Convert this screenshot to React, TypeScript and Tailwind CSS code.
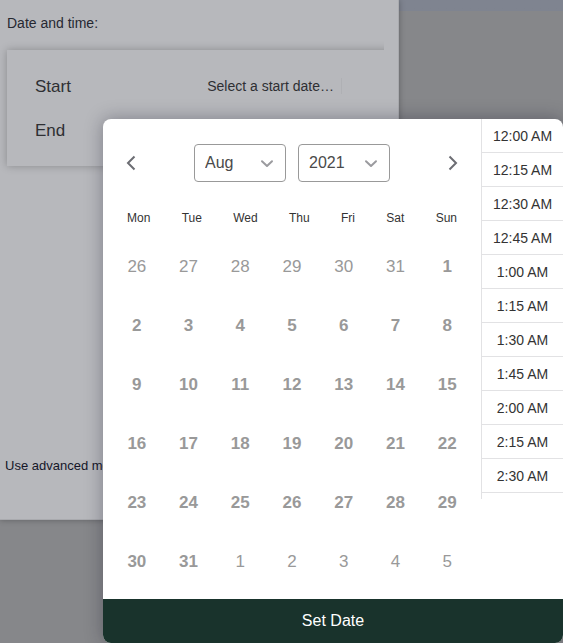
import { useState } from "react";

const months = ["Jan", "Feb", "Mar", "Apr", "May", "Jun", "Jul", "Aug", "Sep", "Oct", "Nov", "Dec"];
const years = ["2020", "2021", "2022"];
const weekdays = ["Mon", "Tue", "Wed", "Thu", "Fri", "Sat", "Sun"];
const times = [
  "12:00 AM",
  "12:15 AM",
  "12:30 AM",
  "12:45 AM",
  "1:00 AM",
  "1:15 AM",
  "1:30 AM",
  "1:45 AM",
  "2:00 AM",
  "2:15 AM",
  "2:30 AM",
];

type Day = { key: string; label: number; current: boolean };

// six weeks starting on a Monday, padded with the neighbouring months
const getDays = (year: number, month: number): Day[] => {
  const offset = (new Date(year, month, 1).getDay() + 6) % 7;
  return Array.from({ length: 42 }, (_, i) => {
    const date = new Date(year, month, 1 - offset + i);
    return {
      key: date.toDateString(),
      label: date.getDate(),
      current: date.getMonth() === month,
    };
  });
};

type DropdownProps = {
  label: string;
  value: string;
  options: string[];
  onChange: (value: string) => void;
};

const Dropdown = ({ label, value, options, onChange }: DropdownProps) => (
  <div className="relative h-[38px] w-[92px]">
    <select
      aria-label={label}
      value={value}
      onChange={(e) => onChange(e.target.value)}
      className="h-full w-full appearance-none rounded border border-[#999999] bg-white pl-[10px] text-base text-[#4a4a4a]"
    >
      {options.map((option) => (
        <option key={option}>{option}</option>
      ))}
    </select>
    <svg
      viewBox="0 0 20 20"
      className="pointer-events-none absolute top-[9px] right-2 h-5 w-5 fill-none stroke-[#9b9b9f] stroke-2"
    >
      <path d="M4 8.2 L9 13 L14 8.2" strokeLinecap="round" strokeLinejoin="round" />
    </svg>
  </div>
);

const App = () => {
  const [month, setMonth] = useState("Aug");
  const [year, setYear] = useState("2021");
  const days = getDays(Number(year), months.indexOf(month));

  const move = (step: number) => {
    const date = new Date(Number(year), months.indexOf(month) + step, 1);
    if (!years.includes(String(date.getFullYear()))) return;
    setMonth(months[date.getMonth()]);
    setYear(String(date.getFullYear()));
  };

  return (
    <div className="relative min-h-screen overflow-hidden bg-[#86878a] font-['Liberation_Sans',Arial,sans-serif]">
      <div className="bg-linear-to-b from-[#7f8490] from-[11px] to-transparent to-[11px]">
        <main className="flex h-[520px] w-full max-w-[399px] flex-col border-r border-b border-[#a9aaae] bg-[#b7b8bc] shadow-[0_0_6px_rgba(0,0,0,0.3)]">
          <h1 className="px-[7px] pt-[13px] text-sm leading-5 text-[#262832]">Date and time:</h1>
          <div className="mr-[14px] overflow-hidden pt-[17px] pb-4 pl-[7px]">
            <div className="-mr-4 flex h-[116px] flex-col gap-5 bg-[#b7b8bc] pt-[25px] pr-[58px] pl-7 text-[17px] leading-6 text-[#2e2f33] shadow-[0_0_8px_rgba(0,0,0,0.25)]">
              <div className="flex items-start justify-between">
                <span>Start</span>
                <button className="mt-[3px] h-4 border-r border-[#afb0b4] pr-[7px] text-sm leading-4">
                  Select a start date…
                </button>
              </div>
              <span>End</span>
            </div>
          </div>
          <a href="#advanced" className="mt-auto mb-[43px] pl-[5px] text-[13px] leading-5 text-[#151629]">
            Use advanced mode
          </a>
        </main>
      </div>

      <div
        role="dialog"
        aria-label="Choose a date"
        className="absolute top-[119px] right-0 left-[103px] overflow-hidden rounded-lg bg-white shadow-[0_0_18px_rgba(20,20,40,0.35)]"
      >
        <div className="flex h-[480px]">
          <div className="flex-1">
            <div className="flex items-center justify-between px-4 pt-[25px]">
              <button aria-label="Previous month" onClick={() => move(-1)}>
                <svg viewBox="0 0 24 24" className="h-6 w-6 fill-none stroke-[#6c6d73] stroke-2">
                  <path d="M15.5 5.5 L9 12 L15.5 18.5" />
                </svg>
              </button>
              <div className="flex gap-3">
                <Dropdown label="Month" value={month} options={months} onChange={setMonth} />
                <Dropdown label="Year" value={year} options={years} onChange={setYear} />
              </div>
              <button aria-label="Next month" onClick={() => move(1)}>
                <svg viewBox="0 0 24 24" className="h-6 w-6 fill-none stroke-[#6c6d73] stroke-2">
                  <path d="M8.5 5.5 L15 12 L8.5 18.5" />
                </svg>
              </button>
            </div>

            <div className="mt-7 flex justify-between px-6 text-xs leading-4 text-[#333333]">
              {weekdays.map((weekday) => (
                <span key={weekday}>{weekday}</span>
              ))}
            </div>

            <div className="mt-[11px] grid grid-cols-7 px-2">
              {days.map((day) => (
                <button
                  key={day.key}
                  className={
                    day.current
                      ? "h-[59px] text-[17px] font-bold text-[#999999]"
                      : "h-[59px] text-[17px] text-[#999999]"
                  }
                >
                  {day.label}
                </button>
              ))}
            </div>
          </div>

          <ul className="h-[380px] w-[82px] overflow-y-auto border-l border-[#e2e2e4]">
            {times.map((time) => (
              <li key={time} className="border-b border-[#e2e2e4]">
                <button className="h-[33px] w-full text-sm text-[#333333]">{time}</button>
              </li>
            ))}
          </ul>
        </div>
        <button className="h-11 w-full bg-[#19332c] text-base text-white">Set Date</button>
      </div>
    </div>
  );
};

export default App;
